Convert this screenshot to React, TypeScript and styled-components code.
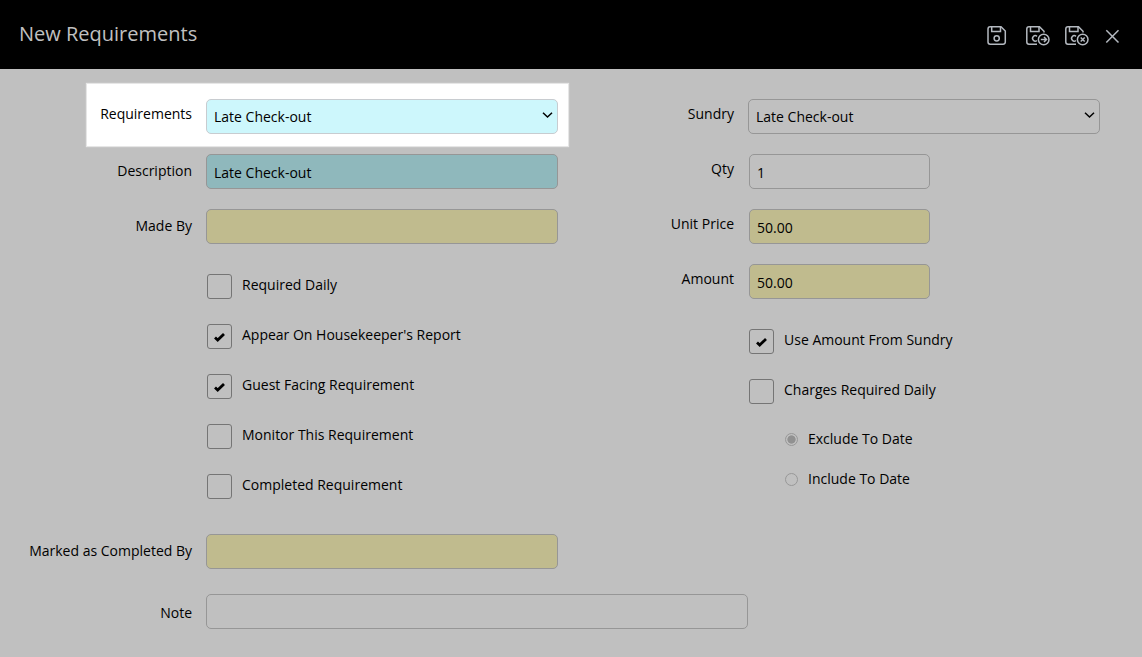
import React, { useState } from 'react';
import styled, { createGlobalStyle, css } from 'styled-components';

const GlobalStyle = createGlobalStyle`
  *, *::before, *::after { box-sizing: border-box; }
  body {
    margin: 0;
    background: #c0c0c0;
    color: #000;
    font-family: "Open Sans", "Noto Sans", sans-serif;
    font-size: 14px;
    line-height: 20px;
  }
  input, select, button { font: inherit; color: inherit; margin: 0; }
`;

const Header = styled.header`
  display: flex;
  align-items: center;
  justify-content: space-between;
  min-height: 69px;
  padding: 0 22px 0 19px;
  background: #000;
  color: #c0c0c0;
`;

const Title = styled.h1`
  margin: 0;
  padding-bottom: 2px;
  font-size: 20px;
  line-height: 28px;
  font-weight: 400;
`;

const Toolbar = styled.div`
  display: flex;
  align-items: center;
  gap: 15px;
  padding-top: 3px;
`;

const IconButton = styled.button`
  display: flex;
  padding: 0;
  border: 0;
  background: none;
  color: #b4b9c0;
  cursor: pointer;
`;

const Form = styled.form`
  padding: 30px 42px 28px 0;
`;

const Columns = styled.div`
  display: flex;
  gap: 14px;
`;

const Column = styled.section<{ $label: number }>`
  --label: ${p => p.$label}px;
  flex: 1 1 calc(var(--label) + 14px);
  min-width: 0;
`;

const Row = styled.div`
  display: grid;
  grid-template-columns: var(--label) minmax(0, 1fr);
  column-gap: 14px;
  align-items: center;
  margin-bottom: 20px;
`;

const Spotlight = styled.div`
  --label: 105px;
  margin: -16px -11px 7px 86px;
  padding: 15px 10px 12px 0;
  border: 1px solid #e6e6e6;
  box-shadow: 0 0 1px #e6e6e6;
  background: #fff;

  ${Row} { margin-bottom: 0; }
`;

const Label = styled.label<{ $raised?: boolean }>`
  padding-bottom: ${p => (p.$raised ? 5 : 1)}px;
  text-align: right;
  white-space: nowrap;
`;

const tones = {
  plain: '#c0c0c0',
  cyan: '#cdf7fc',
  teal: '#8fb8bc',
  khaki: '#c0bb8e',
};

const field = css<{ $tone?: keyof typeof tones }>`
  width: 100%;
  height: 35px;
  border: 1px solid ${p => (p.$tone === 'cyan' ? '#c8ccd0' : '#969696')};
  border-radius: 5px;
  background-color: ${p => tones[p.$tone ?? 'plain']};
`;

const Input = styled.input<{ $tone?: keyof typeof tones }>`
  ${field}
  padding: 1px 7px 0;
`;

const SelectWrap = styled.div`
  display: grid;
  align-items: center;

  & > * { grid-area: 1 / 1; }

  svg {
    justify-self: end;
    margin: 0 5px 3px 0;
    pointer-events: none;
  }
`;

const SelectInput = styled.select<{ $tone?: keyof typeof tones }>`
  ${field}
  appearance: none;
  padding: 0 24px 0 7px;
`;

const Short = styled.div`
  max-width: 182px;
  padding-left: 1px;
`;

const Wide = styled.div`
  max-width: 542px;
`;

const Options = styled.div`
  display: flex;
  flex-direction: column;
  align-items: flex-start;
  gap: 25px;
  margin: 30px 0 0 calc(var(--label) + 15px);
`;

const Option = styled.label`
  display: flex;
  gap: 10px;
`;

const OptionText = styled.span`
  padding-top: 1px;
`;

const Tick = styled.span`
  display: grid;

  & > * { grid-area: 1 / 1; }

  svg {
    place-self: center;
    pointer-events: none;
  }
`;

const CheckInput = styled.input`
  appearance: none;
  width: 25px;
  height: 25px;
  border: 1px solid #757575;
  border-radius: 3px;

  &:not(:checked) + svg { visibility: hidden; }
`;

const Radios = styled.div`
  display: flex;
  flex-direction: column;
  align-items: flex-start;
  gap: 20px;
  margin: 25px 0 0 calc(var(--label) + 51px);
`;

const RadioOption = styled.label`
  display: flex;
  align-items: center;
  gap: 10px;
`;

const RadioInput = styled.input`
  appearance: none;
  width: 13px;
  height: 13px;
  border: 1px solid #989898;
  border-radius: 50%;

  &:checked {
    background: radial-gradient(circle, #919191 48%, transparent 58%);
  }
`;

const Footer = styled.section`
  --label: 192px;
  margin-top: 35px;
`;

const FooterRow = styled(Row)`
  margin-bottom: 25px;
`;

const NoteLabel = styled(Label)`
  padding: 3px 0 0;
`;

const FieldWidth = styled.div`
  width: calc(50% - 95px);
`;

function SaveAndIcon({ children }: { children: React.ReactNode }) {
  return (
    <svg width="24" height="20" viewBox="0 0 24 20" fill="none" stroke="currentColor" strokeWidth="1.5">
      <path d="M11 18.2H3A2.200 2.200 0 0 1 .8 16V3A2.200 2.200 0 0 1 3 .8H13.500L18 5.300V6.500" />
      <path d="M4.500 1V5.500H13V1" />
      <path d="M11 10.300A2.700 2.700 0 1 0 11 14.500" />
      <circle cx="17.700" cy="13.500" r="5.300" />
      {children}
    </svg>
  );
}

function Check({ label, checked = false }: { label: string; checked?: boolean }) {
  return (
    <Option>
      <Tick>
        <CheckInput type="checkbox" defaultChecked={checked} />
        <svg width="13" height="13" viewBox="0 0 13 13" fill="none" stroke="#000" strokeWidth="2.800">
          <path d="M2 7.500L4.700 10L11 4" />
        </svg>
      </Tick>
      <OptionText>{label}</OptionText>
    </Option>
  );
}

function Select({ id, tone, value }: { id: string; tone?: keyof typeof tones; value: string }) {
  return (
    <SelectWrap>
      <SelectInput id={id} $tone={tone}>
        <option>{value}</option>
      </SelectInput>
      <svg width="11" height="8" viewBox="0 0 11 8" fill="none" stroke="#000" strokeWidth="1.500">
        <path d="M1 1.700L5.500 6L10 1.700" />
      </svg>
    </SelectWrap>
  );
}

export default function App() {
  const [range, setRange] = useState('exclude');
  return (
    <>
      <GlobalStyle />
      <Header>
        <Title>New Requirements</Title>
        <Toolbar>
          <IconButton type="button" aria-label="Save">
            <svg width="24" height="20" viewBox="0 0 24 20" fill="none" stroke="currentColor" strokeWidth="1.5">
              <path d="M16 18.200H3.200A2.200 2.200 0 0 1 1 16V3A2.200 2.200 0 0 1 3.200 .8H14L18.300 5V16A2.200 2.200 0 0 1 16 18.200Z" />
              <path d="M4.700 1V5.500H13.500V1" />
              <circle cx="9.700" cy="12.300" r="2.600" />
            </svg>
          </IconButton>
          <IconButton type="button" aria-label="Save and continue">
            <SaveAndIcon>
              <path d="M14.800 13.500H20.500M18 11L20.500 13.500L18 16" />
            </SaveAndIcon>
          </IconButton>
          <IconButton type="button" aria-label="Save and close">
            <SaveAndIcon>
              <path d="M15.700 11.500L19.700 15.500M19.700 11.500L15.700 15.500" />
            </SaveAndIcon>
          </IconButton>
          <IconButton type="button" aria-label="Close">
            <svg width="16" height="16" viewBox="0 0 16 16" fill="none" stroke="currentColor" strokeWidth="1.5">
              <path d="M2.300 2.300L14.500 14.500M14.500 2.300L2.300 14.500" />
            </svg>
          </IconButton>
        </Toolbar>
      </Header>
      <Form>
        <Columns>
          <Column $label={192}>
            <Spotlight>
              <Row>
                <Label htmlFor="requirements" $raised>Requirements</Label>
                <Select id="requirements" tone="cyan" value="Late Check-out" />
              </Row>
            </Spotlight>
            <Row>
              <Label htmlFor="description">Description</Label>
              <Input id="description" $tone="teal" defaultValue="Late Check-out" />
            </Row>
            <Row>
              <Label htmlFor="made-by">Made By</Label>
              <Input id="made-by" $tone="khaki" />
            </Row>
            <Options>
              <Check label="Required Daily" />
              <Check label="Appear On Housekeeper's Report" checked />
              <Check label="Guest Facing Requirement" checked />
              <Check label="Monitor This Requirement" />
              <Check label="Completed Requirement" />
            </Options>
          </Column>
          <Column $label={162}>
            <Row>
              <Label htmlFor="sundry" $raised>Sundry</Label>
              <Select id="sundry" value="Late Check-out" />
            </Row>
            <Row>
              <Label htmlFor="qty" $raised>Qty</Label>
              <Short><Input id="qty" defaultValue="1" /></Short>
            </Row>
            <Row>
              <Label htmlFor="unit-price" $raised>Unit Price</Label>
              <Short><Input id="unit-price" $tone="khaki" defaultValue="50.00" /></Short>
            </Row>
            <Row>
              <Label htmlFor="amount" $raised>Amount</Label>
              <Short><Input id="amount" $tone="khaki" defaultValue="50.00" /></Short>
            </Row>
            <Options>
              <Check label="Use Amount From Sundry" checked />
              <Check label="Charges Required Daily" />
            </Options>
            <Radios>
              <RadioOption>
                <RadioInput type="radio" name="range" checked={range === 'exclude'} onChange={() => setRange('exclude')} />
                Exclude To Date
              </RadioOption>
              <RadioOption>
                <RadioInput type="radio" name="range" checked={range === 'include'} onChange={() => setRange('include')} />
                Include To Date
              </RadioOption>
            </Radios>
          </Column>
        </Columns>
        <Footer>
          <FooterRow>
            <Label htmlFor="completed-by">Marked as Completed By</Label>
            <FieldWidth><Input id="completed-by" $tone="khaki" /></FieldWidth>
          </FooterRow>
          <FooterRow>
            <NoteLabel htmlFor="note">Note</NoteLabel>
            <Wide><Input id="note" /></Wide>
          </FooterRow>
        </Footer>
      </Form>
    </>
  );
}
